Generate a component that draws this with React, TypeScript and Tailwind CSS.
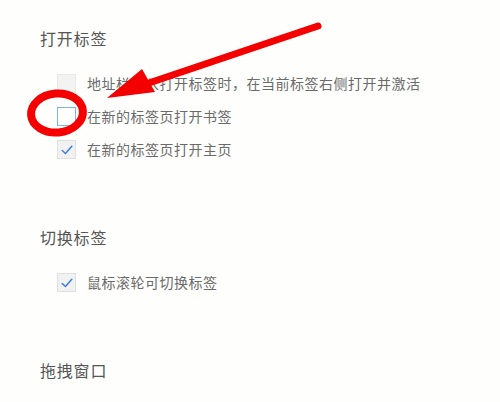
import React from "react";

type Box = "disabled" | "empty" | "checked";

const CheckBox = ({ kind }: { kind: Box }) => {
  if (kind === "empty") {
    return <span className="block h-[19px] w-[19px] border border-[#7fb3f0] bg-white" />;
  }
  if (kind === "disabled") {
    return <span className="block h-[19px] w-[19px] border border-[#e8e8e8] bg-[#f3f3f3]" />;
  }
  return (
    <span className="flex h-[19px] w-[19px] items-center justify-center border border-[#e0e0e0] bg-[#f1f1f1]">
      <svg viewBox="0 0 16 16" className="h-[14px] w-[14px]" fill="none">
        <path d="M2.5 8.5 6.2 12 13.5 3.8" stroke="#3b7bea" strokeWidth="1.7" strokeLinecap="round" strokeLinejoin="round" />
      </svg>
    </span>
  );
};

const Row = ({ kind, label }: { kind: Box; label: string }) => (
  <div className="flex h-[33px] items-center gap-[11px] pl-[17px]">
    <CheckBox kind={kind} />
    <span className="text-[14px] tracking-[0.5px] text-[#6a6a6a]">{label}</span>
  </div>
);

const Heading = ({ children }: { children: React.ReactNode }) => (
  <div className="h-5 text-[16px] leading-5 tracking-[0.8px] text-[#555]">{children}</div>
);

export default function App() {
  return (
    <div
      className="relative h-[402px] w-[500px] overflow-hidden bg-[#fefefc] pl-10 pt-[28px]"
      style={{ fontFamily: '"Noto Sans CJK SC", "Noto Sans", sans-serif' }}
    >
      <Heading>打开标签</Heading>
      <div className="mt-[19px]">
        <Row kind="disabled" label="地址栏输入打开标签时，在当前标签右侧打开并激活" />
        <Row kind="empty" label="在新的标签页打开书签" />
        <Row kind="checked" label="在新的标签页打开主页" />
      </div>

      <div className="mt-[61px]">
        <Heading>切换标签</Heading>
      </div>
      <div className="mt-[19px]">
        <Row kind="checked" label="鼠标滚轮可切换标签" />
      </div>

      <div className="mt-[61px]">
        <Heading>拖拽窗口</Heading>
      </div>

      {/* red annotation drawn over the screenshot */}
      <svg className="pointer-events-none absolute left-0 top-0" width="500" height="402" viewBox="0 0 500 402">
        <ellipse cx="57" cy="113" rx="26" ry="19.5" fill="none" stroke="#f40000" strokeWidth="8" transform="rotate(-5 57 113)" />
        <line x1="318" y1="26" x2="140" y2="86" stroke="#f40000" strokeWidth="7" strokeLinecap="round" />
        <polygon points="107,98 142,69 155,92" fill="#f40000" />
      </svg>
    </div>
  );
}
